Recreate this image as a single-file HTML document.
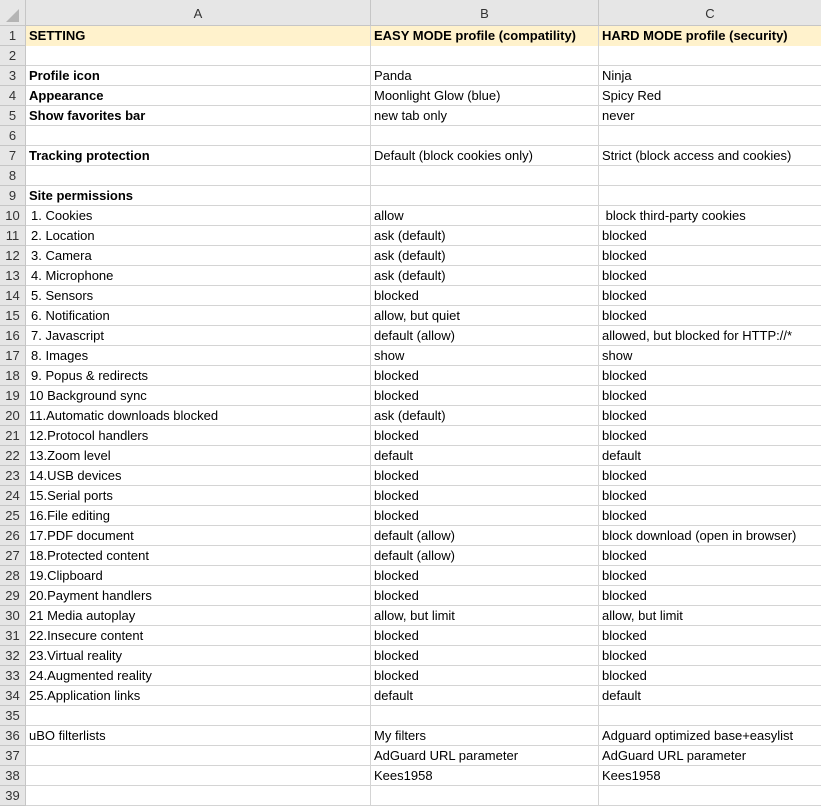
<!DOCTYPE html>
<html><head><style>
*{margin:0;padding:0;box-sizing:border-box}
body{width:821px;height:806px;overflow:hidden;background:#fff;font-family:"Liberation Sans",Arial,sans-serif;font-size:13px;color:#000;position:relative}
.hdr{position:absolute;top:0;left:0;width:821px;height:26px;background:#e6e6e6;border-bottom:1px solid #c6c6c6}
.hdr div{position:absolute;top:0;height:26px;line-height:27px;text-align:center;color:#333;border-right:1px solid #c6c6c6;font-size:13px}
.row{position:absolute;left:0;width:821px;height:20px;border-bottom:1px solid #d4d4d4}
.row div{position:absolute;top:0;height:20px;line-height:20px;white-space:pre;overflow:visible;padding-left:3px;border-right:1px solid #d4d4d4}
.row .n{left:0;width:26px;background:#e6e6e6;text-align:center;padding:0;color:#333;border-right:1px solid #c6c6c6;border-bottom:1px solid #c6c6c6;height:20px}
.a{left:26px;width:345px}.b{left:371px;width:228px}.c{left:599px;width:222px;border-right:none!important}
.y div.a,.y div.b,.y div.c{background:#fff2cc}
.s{padding-left:5px!important}
b{font-weight:bold}
</style></head><body>
<div class="hdr">
<div style="left:0;width:26px"><svg width="26" height="26"><polygon points="19,9 19,22 6,22" fill="#b4b4b4"/></svg></div>
<div style="left:26px;width:345px">A</div>
<div style="left:371px;width:228px">B</div>
<div style="left:599px;width:222px;border-right:none">C</div>
</div>
<div id="rows"></div>
<script>
var d=[
["<b>SETTING</b>","<b>EASY MODE profile (compatility)</b>","<b>HARD MODE profile (security)</b>"],
["","",""],
["<b>Profile icon</b>","Panda","Ninja"],
["<b>Appearance</b>","Moonlight Glow (blue)","Spicy Red"],
["<b>Show favorites bar</b>","new tab only","never"],
["","",""],
["<b>Tracking protection</b>","Default (block cookies only)","Strict (block access and cookies)"],
["","",""],
["<b>Site permissions</b>","",""],
["1. Cookies","allow"," block third-party cookies"],
["2. Location","ask (default)","blocked"],
["3. Camera","ask (default)","blocked"],
["4. Microphone","ask (default)","blocked"],
["5. Sensors","blocked","blocked"],
["6. Notification","allow, but quiet","blocked"],
["7. Javascript","default (allow)","allowed, but blocked for HTTP://*"],
["8. Images","show","show"],
["9. Popus &amp; redirects","blocked","blocked"],
["10 Background sync","blocked","blocked"],
["11.Automatic downloads blocked","ask (default)","blocked"],
["12.Protocol handlers","blocked","blocked"],
["13.Zoom level","default","default"],
["14.USB devices","blocked","blocked"],
["15.Serial ports","blocked","blocked"],
["16.File editing","blocked","blocked"],
["17.PDF document","default (allow)","block download (open in browser)"],
["18.Protected content","default (allow)","blocked"],
["19.Clipboard","blocked","blocked"],
["20.Payment handlers","blocked","blocked"],
["21 Media autoplay","allow, but limit","allow, but limit"],
["22.Insecure content","blocked","blocked"],
["23.Virtual reality","blocked","blocked"],
["24.Augmented reality","blocked","blocked"],
["25.Application links","default","default"],
["","",""],
["uBO filterlists","My filters","Adguard optimized base+easylist"],
["","AdGuard URL parameter","AdGuard URL parameter"],
["","Kees1958","Kees1958"],
["","",""]];
var h="";
for(var i=0;i<d.length;i++){var s=(i>=9&&i<=17)?' s':'';h+='<div class="row'+(i==0?' y':'')+'" style="top:'+(26+i*20)+'px"><div class="n">'+(i+1)+'</div><div class="a'+s+'">'+d[i][0]+'</div><div class="b">'+d[i][1]+'</div><div class="c">'+d[i][2]+'</div></div>';}
document.getElementById("rows").innerHTML=h;
</script>
</body></html>
